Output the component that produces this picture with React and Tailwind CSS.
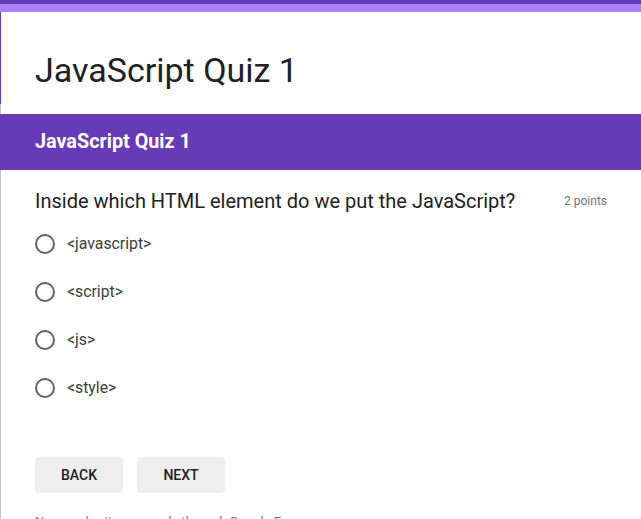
export default function App() {
  const options = ["<javascript>", "<script>", "<js>", "<style>"];
  return (
    <div className="w-[641px] h-[519px] overflow-hidden bg-white" style={{ fontFamily: "Roboto, 'Liberation Sans', sans-serif" }}>
      <div className="h-[4px] bg-[#673ab7]" />
      <div className="h-[8px] bg-[#ab80fa]" />
      <div className="flex flex-col border-l-[1.5px] border-[#673ab7] h-[92px]">
        <div className="pl-[34px] pt-[38px] text-[34px] leading-[40px] text-[#202124]">JavaScript Quiz 1</div>
      </div>
      <div className="border-l-[1.5px] border-[#c4c4d0] h-[10px]" />
      <div className="h-[56px] bg-[#673ab7] flex items-center pl-[35px] text-white text-[19.8px] font-bold">
        JavaScript Quiz 1
      </div>
      <div className="border-l-[1.5px] border-[#c4c4d0] h-[400px]">
        <div className="flex items-start justify-between pl-[34px] pr-[34px] pt-[17px]">
          <div className="text-[20px] leading-[28px] text-[#202124]">Inside which HTML element do we put the JavaScript?</div>
          <div className="text-[12px] text-[#70757a] pt-[5px]">2 points</div>
        </div>
        <div className="flex flex-col pl-[34px] pt-[5px]">
          {options.map((o) => (
            <div key={o} className="flex items-center h-[48px] gap-[12px]">
              <div className="w-[20px] h-[20px] rounded-full border-2 border-[#5f6368]" />
              <div className="text-[15.8px] text-[#3c3c3c]">{o}</div>
            </div>
          ))}
        </div>
        <div className="flex gap-[14px] pl-[34px] pt-[45px]">
          <button className="w-[88px] h-[36px] rounded bg-[#eeeeee] text-[14px] font-medium text-[#202124]">BACK</button>
          <button className="w-[88px] h-[36px] rounded bg-[#eeeeee] text-[14px] font-medium text-[#202124]">NEXT</button>
        </div>
        <div className="pl-[34px] pt-[19px] text-[13px] text-[#70757a]">Never submit passwords through Google Forms.</div>
      </div>
    </div>
  );
}
